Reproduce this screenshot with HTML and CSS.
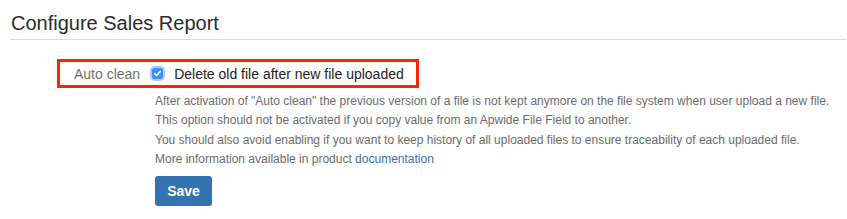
FILE: index.html
```html
<!DOCTYPE html>
<html lang="en">
  <head>
    <meta charset="UTF-8" />
    <title>Configure Sales Report</title>
    <link rel="stylesheet" href="styles.css">
  </head>
  <body>
    <div class="page">
      <h2 class="page-title">Configure Sales Report</h2>

      <form class="config-form">
        <div class="highlight-row">
          <span class="field-label">Auto clean</span>
          <label class="check-field">
            <span class="check-box">
              <svg width="9" height="9" viewBox="0 0 9 9">
                <path d="M1.8 4.8 L3.7 6.6 L7.2 2.4" fill="none" stroke="#fff" stroke-width="1.6" stroke-linecap="round" stroke-linejoin="round"/>
              </svg>
            </span>
            Delete old file after new file uploaded
          </label>
        </div>

        <div class="field-help">
          <div>After activation of "Auto clean" the previous version of a file is not kept anymore on the file system when user upload a new file.</div>
          <div>This option should not be activated if you copy value from an Apwide File Field to another.</div>
          <div>You should also avoid enabling if you want to keep history of all uploaded files to ensure traceability of each uploaded file.</div>
          <div>More information available in product <a href="#">documentation</a></div>
        </div>

        <div class="buttons">
          <button type="button" class="btn-primary">Save</button>
        </div>
      </form>
    </div>
  </body>
</html>
```

FILE: styles.css
```css
body {
  margin: 0;
  font-family: "Liberation Sans", Arial, sans-serif;
  color: #333;
  background: #fff;
}
.page {
  padding: 0 1px 0 10px;
}
.page-title {
  margin: 11px 0 0;
  padding: 0 0 4px 1px;
  font-size: 20px;
  font-weight: normal;
  line-height: 24px;
  color: #2b2b2b;
  border-bottom: 1px solid #dcdcdc;
}
.config-form {
  margin: 19px 0 0 47px;
}
.highlight-row {
  display: inline-flex;
  align-items: center;
  height: 23px;
  padding: 0 12px 0 14px;
  border: 3px solid #f8250b;
  font-size: 14px;
}
.field-label {
  color: #707070;
  margin-right: 12px;
}
.check-field {
  display: flex;
  align-items: center;
  color: #222;
}
.check-box {
  display: flex;
  align-items: center;
  justify-content: center;
  width: 11px;
  height: 11px;
  margin-right: 11px;
  border-radius: 3px;
  background: #3d8ef5;
  box-shadow: 0 0 0 2px #a9cbf6;
}
.field-help {
  margin: 4px 0 0 98px;
  font-size: 12px;
  line-height: 19.4px;
  color: #6b6b6b;
}
.field-help a {
  color: #3572b0;
  text-decoration: none;
}
.buttons {
  margin: 6px 0 0 98px;
}
.btn-primary {
  width: 57px;
  height: 30px;
  padding: 0;
  border: 0;
  border-radius: 3px;
  background: #3572b0;
  color: #fff;
  font-family: "Liberation Sans", Arial, sans-serif;
  font-size: 14px;
  font-weight: bold;
}
```
